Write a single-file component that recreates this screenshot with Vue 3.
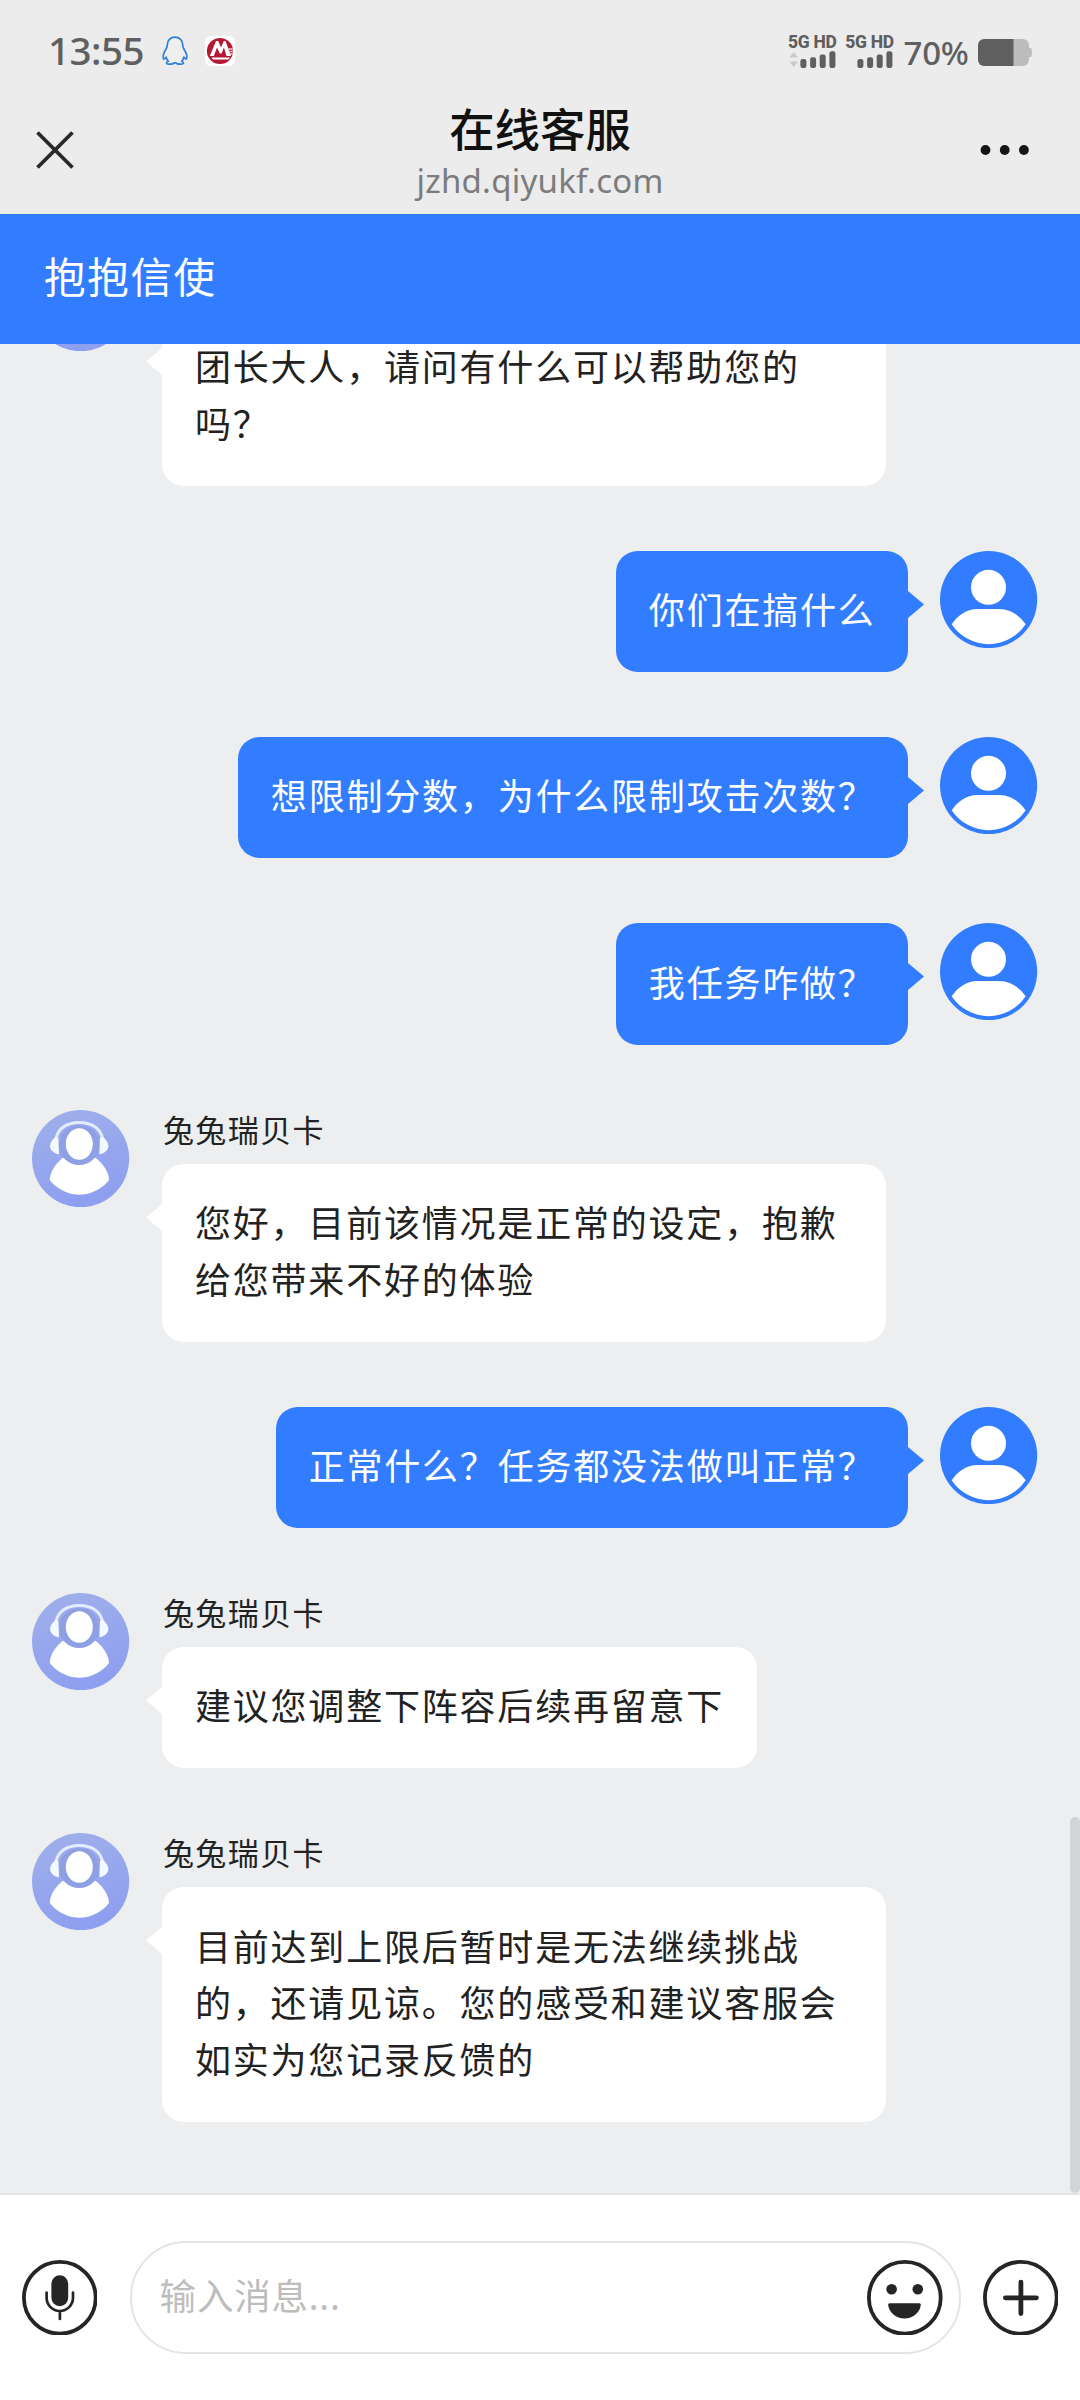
<script setup>
const messages = [
  { from: 'agent', name: '', lines: ['团长大人，请问有什么可以帮助您的', '吗？'], wide: true },
  { from: 'user', lines: ['你们在搞什么'] },
  { from: 'user', lines: ['想限制分数，为什么限制攻击次数？'] },
  { from: 'user', lines: ['我任务咋做？'] },
  { from: 'agent', name: '兔兔瑞贝卡', lines: ['您好，目前该情况是正常的设定，抱歉', '给您带来不好的体验'], wide: true },
  { from: 'user', lines: ['正常什么？任务都没法做叫正常？'] },
  { from: 'agent', name: '兔兔瑞贝卡', lines: ['建议您调整下阵容后续再留意下'] },
  { from: 'agent', name: '兔兔瑞贝卡', lines: ['目前达到上限后暂时是无法继续挑战', '的，还请见谅。您的感受和建议客服会', '如实为您记录反馈的'], wide: true },
]
const sims = [{ id: 1, arrows: true }, { id: 2, arrows: false }]
</script>

<template>
  <div class="screen">
    <div class="status">
      <span class="clock">13:55</span>
      <svg class="qq" width="26" height="29" viewBox="0 0 26 29">
        <path d="M13 1.2C8.4 1.2 5.3 4.4 5.3 8.8c0 1.5-.3 2.300-.9 3.700C2.600 15.400 1.200 18 1.200 20.400c0 1.800.3 2.700.8 2.700.7 0 1.500-1 2.200-2 .3 1.800 1.100 3.200 2.200 4.200-1.200.5-1.900 1-1.900 1.700 0 1 1.600 1.200 3.600 1.200 2 0 3.500-.4 4.100-1.400h1.600c.6 1 2.100 1.400 4.100 1.400 2 0 3.600-.2 3.600-1.200 0-.7-.7-1.200-1.900-1.700 1.100-1 1.900-2.400 2.200-4.200.7 1 1.500 2 2.200 2 .5 0 .8-.9.8-2.700 0-2.400-1.400-5-3.200-7.900-.6-1.400-.9-2.200-.9-3.700C20.700 4.400 17.600 1.200 13 1.200z" fill="#f1eeee" stroke="#2f80d8" stroke-width="1.700" stroke-linejoin="round" />
      </svg>
      <svg class="bank" width="30" height="30" viewBox="0 0 30 30">
        <rect width="30" height="30" rx="6" fill="#fff" />
        <circle cx="15" cy="15" r="13.100" fill="#b31933" />
        <path d="M4.800 20L11 5h2.200L16 11.500 18.800 5H20.500L26 20H21.500L18.900 11.500 16.600 17.500H14.800L12 11.500 8.800 20z" fill="#fff" />
        <path d="M6.500 21.500h18.500l-1.600 1.900H8z" fill="#fff" />
        <path d="M22.500 13h5.300M23.500 15.500h5M24.500 18h3.500" stroke="#edc3ca" stroke-width="1.300" />
      </svg>
      <div class="spacer"></div>
      <div v-for="s in sims" :key="s.id" class="sim">
        <span class="net">5G HD</span>
        <svg width="48" height="17" viewBox="0 0 48 17">
          <path v-if="s.arrows" d="M1.400 6.500L5.700 1l4.300 5.500zM1.400 10.500L5.700 16l4.300-5.500z" fill="#cbcbcb" />
          <g fill="#5f5f5f">
            <rect x="12.400" y="8" width="6" height="9" rx="2.200" />
            <rect x="22.100" y="6.300" width="6" height="10.700" rx="2.200" />
            <rect x="31.700" y="3.400" width="6" height="13.600" rx="2.200" />
            <rect x="41.400" y=".3" width="6" height="16.700" rx="2.200" />
          </g>
        </svg>
      </div>
      <span class="pct">70%</span>
      <svg class="battery" width="54" height="27" viewBox="0 0 54 27">
        <path d="M35 0h10a6 6 0 0 1 6 6v2.700h.5a2.300 2.300 0 0 1 2.300 2.300v5a2.300 2.300 0 0 1-2.300 2.300H51V21a6 6 0 0 1-6 6H35z" fill="#bcbcbc" />
        <path d="M6 0h29.500v27H6a6 6 0 0 1-6-6V6a6 6 0 0 1 6-6z" fill="#5f5f5f" />
      </svg>
    </div>

    <header class="nav">
      <svg class="close" width="38" height="38" viewBox="0 0 38 38">
        <path d="M1.500 1.500l35 35M36.500 1.500l-35 35" stroke="#2a2a2a" stroke-width="3.800" />
      </svg>
      <div class="titles">
        <div class="title">在线客服</div>
        <div class="url">jzhd.qiyukf.com</div>
      </div>
      <svg class="more" width="50" height="12" viewBox="0 0 50 12">
        <g fill="#151515">
          <circle cx="5.500" cy="6" r="4.900" /><circle cx="24.700" cy="6" r="4.900" /><circle cx="43.900" cy="6" r="4.900" />
        </g>
      </svg>
    </header>

    <div class="banner">抱抱信使</div>

    <main class="chat">
      <div v-for="(m, i) in messages" :key="i" class="row" :class="m.from">
        <svg v-if="m.from === 'agent'" class="avatar" viewBox="0 0 97.200 97.200">
          <defs>
            <linearGradient :id="'sky' + i" x1="0" y1="0" x2=".3" y2="1">
              <stop offset="0" stop-color="#a0b0ea" /><stop offset="1" stop-color="#8f9ff0" />
            </linearGradient>
          </defs>
          <circle cx="48.600" cy="48.600" r="48.600" :fill="'url(#sky' + i + ')'" />
          <path d="M30.500 48C23 54 17.800 63 17.800 69.500c2 4.500 14 15.200 29.600 15.200s27.600-10.700 29.600-15.200C77 63 71.500 54 64 48z" fill="#fff" />
          <ellipse cx="47.200" cy="35" rx="20" ry="20" fill="#8f9fe3" />
          <path d="M24.200 29C25.500 18.500 35 12.600 47.300 12.600S69 18.500 70.400 29" fill="none" stroke="#e3ecfd" stroke-width="3" />
          <path d="M27 44.300c-5-.8-9-4.300-9-8.300 0-3.300 2-5.500 4.500-8.200l1.300-1.300 2.600 1.700zM67.400 44.300c5-.8 9-4.300 9-8.300 0-3.300-2-5.500-4.300-8.200l-1.500-1.300-2.600 1.700z" fill="#f4f8ff" />
          <ellipse cx="47.300" cy="34" rx="13.500" ry="15.800" fill="#fff" />
        </svg>
        <div class="body">
          <div v-if="m.from === 'agent'" class="name">{{ m.name }}</div>
          <div class="bubble" :class="{ wide: m.wide }">
            <div v-for="line in m.lines" :key="line" class="line">{{ line }}</div>
            <svg class="tail" width="17" height="27" viewBox="0 0 17 27"><path d="M17 0L1 13.500 17 27z" /></svg>
          </div>
        </div>
        <svg v-if="m.from === 'user'" class="avatar" viewBox="0 0 97.200 97.200">
          <circle cx="48.600" cy="48.600" r="48.600" fill="#327dff" />
          <circle cx="48.500" cy="36.300" r="17.500" fill="#fff" />
          <path d="M11.700 73.300C17 65.500 25.500 58 38 58h21c12.500 0 21 7.500 26.700 15.300A44.600 44.600 0 0 1 48.700 93.200 44.600 44.600 0 0 1 11.700 73.300z" fill="#fff" />
        </svg>
      </div>
      <div class="thumb"></div>
    </main>

    <footer class="composer">
      <svg class="ico" viewBox="0 0 75.600 75.600">
        <circle cx="37.800" cy="37.800" r="35.900" fill="none" stroke="#252525" stroke-width="3.800" />
        <rect x="29.400" y="15.200" width="16.800" height="31" rx="8.400" fill="#252525" />
        <path d="M24.600 32.500v5.300a13.200 13.200 0 0 0 26.400 0v-5.300M37.900 51v8" fill="none" stroke="#252525" stroke-width="2.700" stroke-linecap="round" />
      </svg>
      <div class="field">
        <span class="hint">输入消息...</span>
        <svg class="ico" viewBox="0 0 75.600 75.600">
          <circle cx="37.800" cy="37.800" r="35.900" fill="none" stroke="#252525" stroke-width="3.800" />
          <circle cx="24.600" cy="29.200" r="5.300" fill="#252525" /><circle cx="50.800" cy="29.200" r="5.300" fill="#252525" />
          <path d="M22.700 43.300h29.600c1 0 1.600.7 1.500 1.700C53 52.500 46 58.500 37.500 58.500S22 52.500 21.200 45c-.1-1 .5-1.700 1.500-1.700z" fill="#252525" />
        </svg>
      </div>
      <svg class="ico" viewBox="0 0 75.600 75.600">
        <circle cx="37.800" cy="37.800" r="35.900" fill="none" stroke="#252525" stroke-width="3.800" />
        <path d="M22.400 37.800h31M37.900 22.200v31.400" stroke="#252525" stroke-width="4.800" stroke-linecap="round" />
      </svg>
    </footer>
  </div>
</template>

<style>
body { margin: 0; background: #eceeef; }
</style>

<style scoped>
.screen {
  width: 1080px;
  height: 2400px;
  display: flex;
  flex-direction: column;
  overflow: hidden;
  background: #eceeef;
  font-family: "Noto Sans CJK SC", "Noto Sans", sans-serif;
  color: #222;
}
svg { display: block; flex: none; }
.status {
  height: 82px;
  flex: none;
  box-sizing: border-box;
  padding: 20px 48px 0 48px;
  display: flex;
  align-items: center;
  background: #ececec;
  font-family: "Noto Sans", sans-serif;
  color: #5f5f5f;
}
.clock { width: 114px; font-size: 38.500px; font-weight: 500; letter-spacing: -0.500px; line-height: 58px; padding-bottom: 2px; white-space: nowrap; }
.qq { margin-bottom: 1px; }
.bank { margin-left: 17px; }
.spacer { flex: 1; }
.sim { width: 48px; margin-right: 9.300px; display: flex; flex-direction: column; padding-bottom: 1px; }
.net { font: 800 17.500px/17px Roboto, sans-serif; letter-spacing: -0.300px; white-space: nowrap; }
.pct { width: 74.500px; margin-left: 1px; padding-top: 4px; box-sizing: border-box; font-size: 33px; font-weight: 500; line-height: 50px; white-space: nowrap; letter-spacing: -0.200px; }
.battery { margin-top: 3px; }
.nav {
  height: 132px;
  flex: none;
  box-sizing: border-box;
  padding: 3px 50px 0 36px;
  display: flex;
  align-items: center;
  background: #ececec;
}
.titles { flex: 1; text-align: center; padding: 4px 0 0 26px; }
.title { font-size: 45.400px; font-weight: 500; line-height: 57px; color: #111; }
.url { font: 400 33px/49px "Noto Sans", sans-serif; letter-spacing: 0.250px; color: #7c7c7c; }
.banner {
  height: 130px;
  flex: none;
  box-sizing: border-box;
  padding: 0 44px 5px;
  line-height: 122px;
  font-size: 41.500px;
  letter-spacing: 1.700px;
  color: #fff;
  background: #327dff;
}
.chat {
  position: relative;
  flex: 1;
  min-height: 0;
  box-sizing: border-box;
  padding: 0 42.400px 71px 32.400px;
  display: flex;
  flex-direction: column;
  justify-content: flex-end;
  gap: 64.800px;
  overflow: hidden;
}
.row { display: flex; flex: none; align-items: flex-start; gap: 32.400px; }
.row.user { justify-content: flex-end; }
.avatar { width: 97.200px; height: 97.200px; }
.body { display: flex; flex-direction: column; align-items: flex-start; }
.name { height: 54px; line-height: 38px; font-size: 31px; letter-spacing: 1.400px; padding-left: 1px; box-sizing: border-box; }
.bubble {
  position: relative;
  box-sizing: border-box;
  padding: 29.400px 32.400px 35.400px 33px;
  border-radius: 21.600px;
  background: #fff;
}
.wide { width: 724px; }
.line { font-size: 36px; letter-spacing: 1.800px; line-height: 56.700px; white-space: nowrap; }
.tail { position: absolute; top: 40px; left: -16.500px; fill: #fff; }
.user .bubble { background: #327dff; color: #fff; }
.user .tail { left: auto; right: -16.500px; transform: scaleX(-1); fill: #327dff; }
.thumb { position: absolute; right: 0; top: 1473px; bottom: 0; width: 10px; border-radius: 5px; background: #d3d4d5; }
.composer {
  height: 207px;
  flex: none;
  box-sizing: border-box;
  border-top: 2px solid #e2e3e4;
  padding: 0 21.600px;
  display: flex;
  align-items: center;
  background: #fff;
}
.ico { width: 75.600px; height: 75.600px; }
.field {
  flex: 1;
  margin: 0 21.600px 0 32.400px;
  height: 113px;
  box-sizing: border-box;
  border: 2px solid #e4e4e4;
  border-radius: 56px;
  padding: 0 16.500px 0 28px;
  display: flex;
  align-items: center;
  justify-content: space-between;
}
.hint { font-family: "Noto Sans", "Noto Sans CJK SC", sans-serif; font-size: 36.500px; letter-spacing: 0.800px; line-height: 50px; color: #bdbdbd; padding-bottom: 4px; }
</style>
